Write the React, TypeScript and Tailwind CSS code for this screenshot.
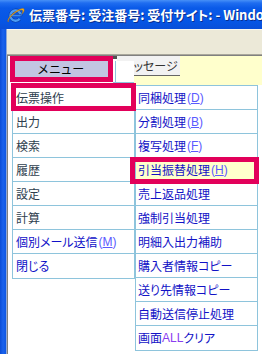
import React from "react";

const mainItems: { label: string; blue?: boolean; acc?: string }[] = [
  { label: "伝票操作" },
  { label: "出力" },
  { label: "検索" },
  { label: "履歴" },
  { label: "設定" },
  { label: "計算" },
  { label: "個別メール送信", blue: true, acc: "M" },
  { label: "閉じる", blue: true },
];

const subItems: { label: string; acc?: string; hl?: boolean; all?: boolean }[] = [
  { label: "同梱処理", acc: "D" },
  { label: "分割処理", acc: "B" },
  { label: "複写処理", acc: "F" },
  { label: "引当振替処理", acc: "H", hl: true },
  { label: "売上返品処理" },
  { label: "強制引当処理" },
  { label: "明細入出力補助" },
  { label: "購入者情報コピー" },
  { label: "送り先情報コピー" },
  { label: "自動送信停止処理" },
  { label: "画面ALLクリア", all: true },
];

function Acc({ c }: { c: string }) {
  return (
    <span className="text-[#5a5aff] font-['Liberation_Sans',sans-serif] text-[12px] ml-[1px]">
      (<span className="underline">{c}</span>)
    </span>
  );
}

function IEIcon() {
  return (
    <svg width="19" height="19" viewBox="0 0 19 19" className="shrink-0 block">
      {/* blue "e" */}
      <path d="M14.8 10.6 A5.2 5.2 0 1 0 13.7 13.8" fill="none" stroke="#0B3DA6" strokeWidth="3.6" />
      <path d="M14.8 10.6 A5.2 5.2 0 1 0 13.7 13.8" fill="none" stroke="#4A9BF5" strokeWidth="2.4" />
      <rect x="5" y="9.4" width="10" height="2.4" fill="#3A8AF0" stroke="#0B3DA6" strokeWidth="0.5" />
      {/* orange swoosh */}
      <path
        d="M2.2 17c-1.4-1.6 1.4-6 6-9.4 4.4-3.2 8.4-4.8 9.7-3.6.9.9.1 2.9-1.8 5.2.7-1.9.9-3.3.3-3.9-1.1-1-4.7.6-8.4 3.5-3.8 3-6.3 6.5-5.6 8.1z"
        fill="#F6B41C"
        stroke="#B06800"
        strokeWidth="0.4"
      />
    </svg>
  );
}

export default function App() {
  return (
    <div className="w-[262px] h-[354px] overflow-hidden bg-white flex flex-col font-['Noto_Sans_CJK_JP',sans-serif] [font-feature-settings:'palt']">
      {/* title bar */}
      <div className="h-[29px] shrink-0 flex items-center pl-[6px] gap-[4px] bg-[linear-gradient(to_bottom,#4790F7_0px,#1F6DF0_3px,#0A5AE8_8px,#0655E4_22px,#0A4FD8_29px)]">
        <IEIcon />
        <div className="flex-1 min-w-0 overflow-hidden whitespace-nowrap text-white font-bold text-[13px] [text-shadow:1px_1px_0_#0A2F90]">
          伝票番号: 受注番号: 受付サイト: - Windo
        </div>
      </div>
      <div className="flex flex-1 min-h-0">
        {/* left window frame */}
        <div className="w-[6px] shrink-0 bg-[linear-gradient(to_right,#0A4CD6,#1A62EC_3px,#0D57E4)]" />
        <div className="w-[1px] shrink-0 bg-[#8EA7D6]" />
        <div className="flex-1 flex flex-col min-w-0">
          {/* toolbar */}
          <div className="h-[25px] shrink-0 bg-[#ECE9D8] border-t border-[#F8F7F1]" />
          <div className="h-[2px] shrink-0 bg-[#A9A79B] border-b border-[#808080]" />
          {/* content */}
          <div className="flex-1 flex flex-col border-l border-[#7F7F7F] bg-white min-h-0">
            {/* top band */}
            <div className="relative h-[29px] shrink-0 flex">
              <div className="w-[105px] shrink-0 pl-[2px] bg-white">
                <div className="w-[103px] h-[26px] border-[5px] border-[#E2005A] bg-[#C2C5E2] flex items-center justify-center text-[12px] text-black leading-none tracking-[1px]">
                  メニュー
                </div>
              </div>
              <div className="w-[4px] h-[3px] bg-[#505050] shrink-0" />
              <div className="flex-1 bg-[#FFFFCC] flex">
                <div className="h-[20px] bg-[#F2F2F2] text-[12px] text-[#333] leading-[20px] pl-[6px] pr-[2px] whitespace-nowrap border-b border-[#666]">
                  メッセージ
                </div>
              </div>
              {/* white box overlapping the tab */}
              <div className="absolute left-[107px] top-[5px] w-[19px] h-[22px] bg-white border-l border-b border-[#8EC4DC]" />
            </div>
            {/* menus */}
            <div className="flex pl-[4px] -mt-[3px] items-start">
              <div className="w-[123px] shrink-0 border border-[#8EC4DC]">
                {mainItems.map((it, i) => (
                  <div
                    key={it.label}
                    className={`relative flex items-center pl-[3px] text-[12px] whitespace-nowrap ${
                      i === 0 ? "h-[27px] pt-[3px]" : "h-[24px]"
                    } ${i < mainItems.length - 1 ? "border-b border-[#8EC4DC]" : "h-[23px]"} ${
                      it.blue ? "text-[#1010C8]" : "text-[#2E3E4E]"
                    }`}
                  >
                    {it.label}
                    {it.acc && <Acc c={it.acc} />}
                    {i === 0 && (
                      <div className="absolute -left-[2px] -right-[2px] top-0 -bottom-[2px] border-[5px] border-[#E2005A]" />
                    )}
                  </div>
                ))}
              </div>
              <div className="w-[123px] shrink-0 border border-[#8EC4DC] mt-[3px]">
                {subItems.map((it, i) => (
                  <div
                    key={it.label}
                    className={`relative h-[24px] flex items-center pl-[2px] text-[12px] whitespace-nowrap text-[#1212C6] ${
                      i < subItems.length - 1 ? "border-b border-[#8EC4DC]" : "h-[23px]"
                    } ${it.hl ? "bg-[#FFFFCC]" : ""}`}
                  >
                    {it.all ? (
                      <>
                        画面<span className="text-[#8A3CF0] font-['Liberation_Sans',sans-serif]">ALL</span>クリア
                      </>
                    ) : (
                      it.label
                    )}
                    {it.acc && <Acc c={it.acc} />}
                    {it.hl && (
                      <div className="absolute -left-[6px] -right-[2px] -top-[1px] -bottom-[3px] border-[5px] border-[#E2005A]" />
                    )}
                  </div>
                ))}
              </div>
            </div>
          </div>
        </div>
      </div>
    </div>
  );
}
